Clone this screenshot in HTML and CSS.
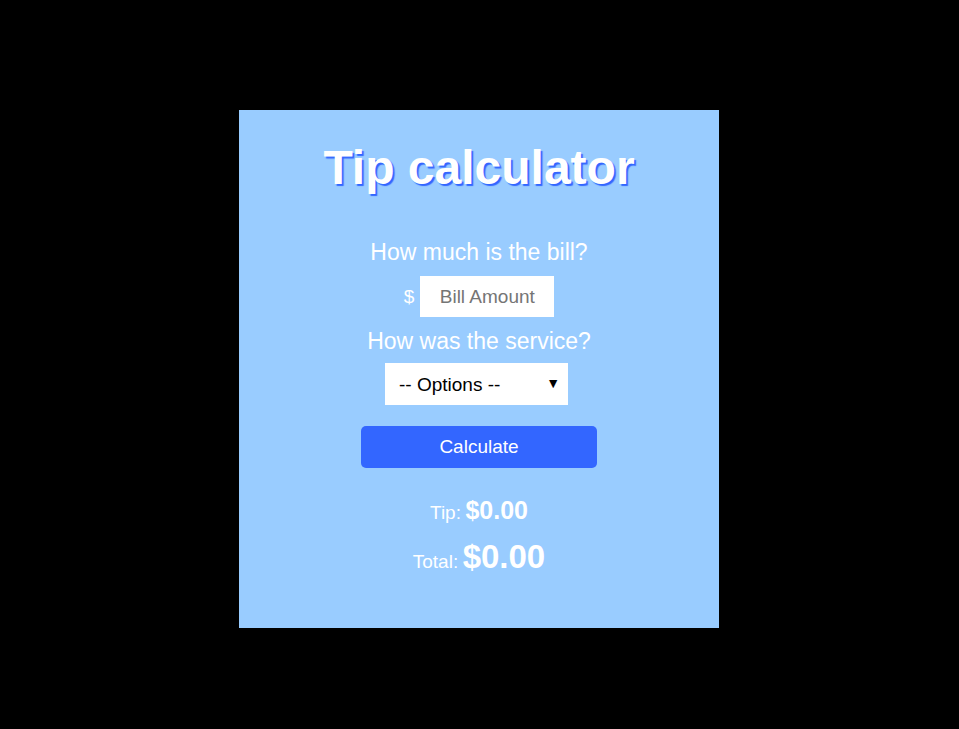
FILE: index.html
```html
<!DOCTYPE html>
<html lang="en">
<head>
<meta charset="utf-8">
<title>Tip calculator</title>
<link rel="stylesheet" href="styles.css">
</head>
<body>
<div class="card">
  <h1 class="title">Tip calculator</h1>
  <p class="question q-bill">How much is the bill?</p>
  <div class="bill-row">
    <span class="currency">$</span>
    <input class="bill-input" type="text" placeholder="Bill Amount">
  </div>
  <p class="question q-service">How was the service?</p>
  <div class="select-wrap">
    <select class="service-select">
      <option>-- Options --</option>
      <option>30% - Outstanding</option>
      <option>20% - Good</option>
      <option>15% - It was OK</option>
      <option>10% - Bad</option>
      <option>5% - Terrible</option>
    </select>
    <span class="select-arrow">&#9660;</span>
  </div>
  <button class="calc-btn" type="button">Calculate</button>
  <div class="results">
    <p class="result tip-line"><span class="label">Tip:</span> <span class="tip-value">$0.00</span></p>
    <p class="result total-line"><span class="label">Total:</span> <span class="total-value">$0.00</span></p>
  </div>
</div>
</body>
</html>
```

FILE: styles.css
```css
html, body {
  margin: 0;
  padding: 0;
  background: #000;
  height: 100%;
}
body {
  font-family: "Liberation Sans", Arial, sans-serif;
  display: flex;
  justify-content: center;
  align-items: flex-start;
  padding-right: 1px;
  box-sizing: border-box;
}
.card {
  box-sizing: border-box;
  width: 480px;
  height: 518px;
  margin-top: 110px;
  background: #99ccff;
  padding-top: 30px;
  text-align: center;
  color: #fff;
  display: flex;
  flex-direction: column;
  align-items: center;
}
.title {
  margin: 0;
  font-size: 48px;
  line-height: 55px;
  font-weight: bold;
  color: #fff;
  text-shadow: 2px 2px 1px #3366ff;
}
.question {
  margin: 0;
  font-size: 23px;
  line-height: 26px;
}
.q-bill {
  margin-top: 44px;
}
.bill-row {
  margin-top: 11px;
  display: flex;
  align-items: center;
  gap: 6px;
  margin-left: 0;
}
.currency {
  font-size: 19px;
}
.bill-input {
  box-sizing: border-box;
  width: 134px;
  height: 41px;
  border: none;
  outline: none;
  background: #fff;
  font-family: "Liberation Sans", Arial, sans-serif;
  font-size: 19px;
  text-align: center;
  padding: 0;
  color: #333;
}
.bill-input::placeholder {
  color: #757575;
}
.q-service {
  margin-top: 11px;
}
.select-wrap {
  position: relative;
  margin-top: 9px;
  margin-left: -5px;
  width: 183px;
  height: 42px;
}
.service-select {
  box-sizing: border-box;
  width: 100%;
  height: 100%;
  border: none;
  outline: none;
  background: #fff;
  -webkit-appearance: none;
  appearance: none;
  font-family: "Liberation Sans", Arial, sans-serif;
  font-size: 19px;
  color: #000;
  padding: 0 0 0 14px;
  border-radius: 0;
}
.select-arrow {
  position: absolute;
  right: 8px;
  top: 50%;
  transform: translateY(-56%);
  font-size: 14px;
  line-height: 1;
  color: #000;
  pointer-events: none;
}
.calc-btn {
  margin-top: 21px;
  width: 236px;
  height: 42px;
  border: none;
  border-radius: 5px;
  background: #3366ff;
  color: #fff;
  font-family: "Liberation Sans", Arial, sans-serif;
  font-size: 19px;
  cursor: pointer;
}
.results {
  margin-top: 28px;
  display: flex;
  flex-direction: column;
  align-items: center;
}
.result {
  margin: 0;
}
.label {
  font-size: 19px;
}
.tip-value {
  font-size: 25px;
  font-weight: bold;
}
.total-line {
  margin-top: 13px;
}
.total-value {
  font-size: 33px;
  font-weight: bold;
}
```
